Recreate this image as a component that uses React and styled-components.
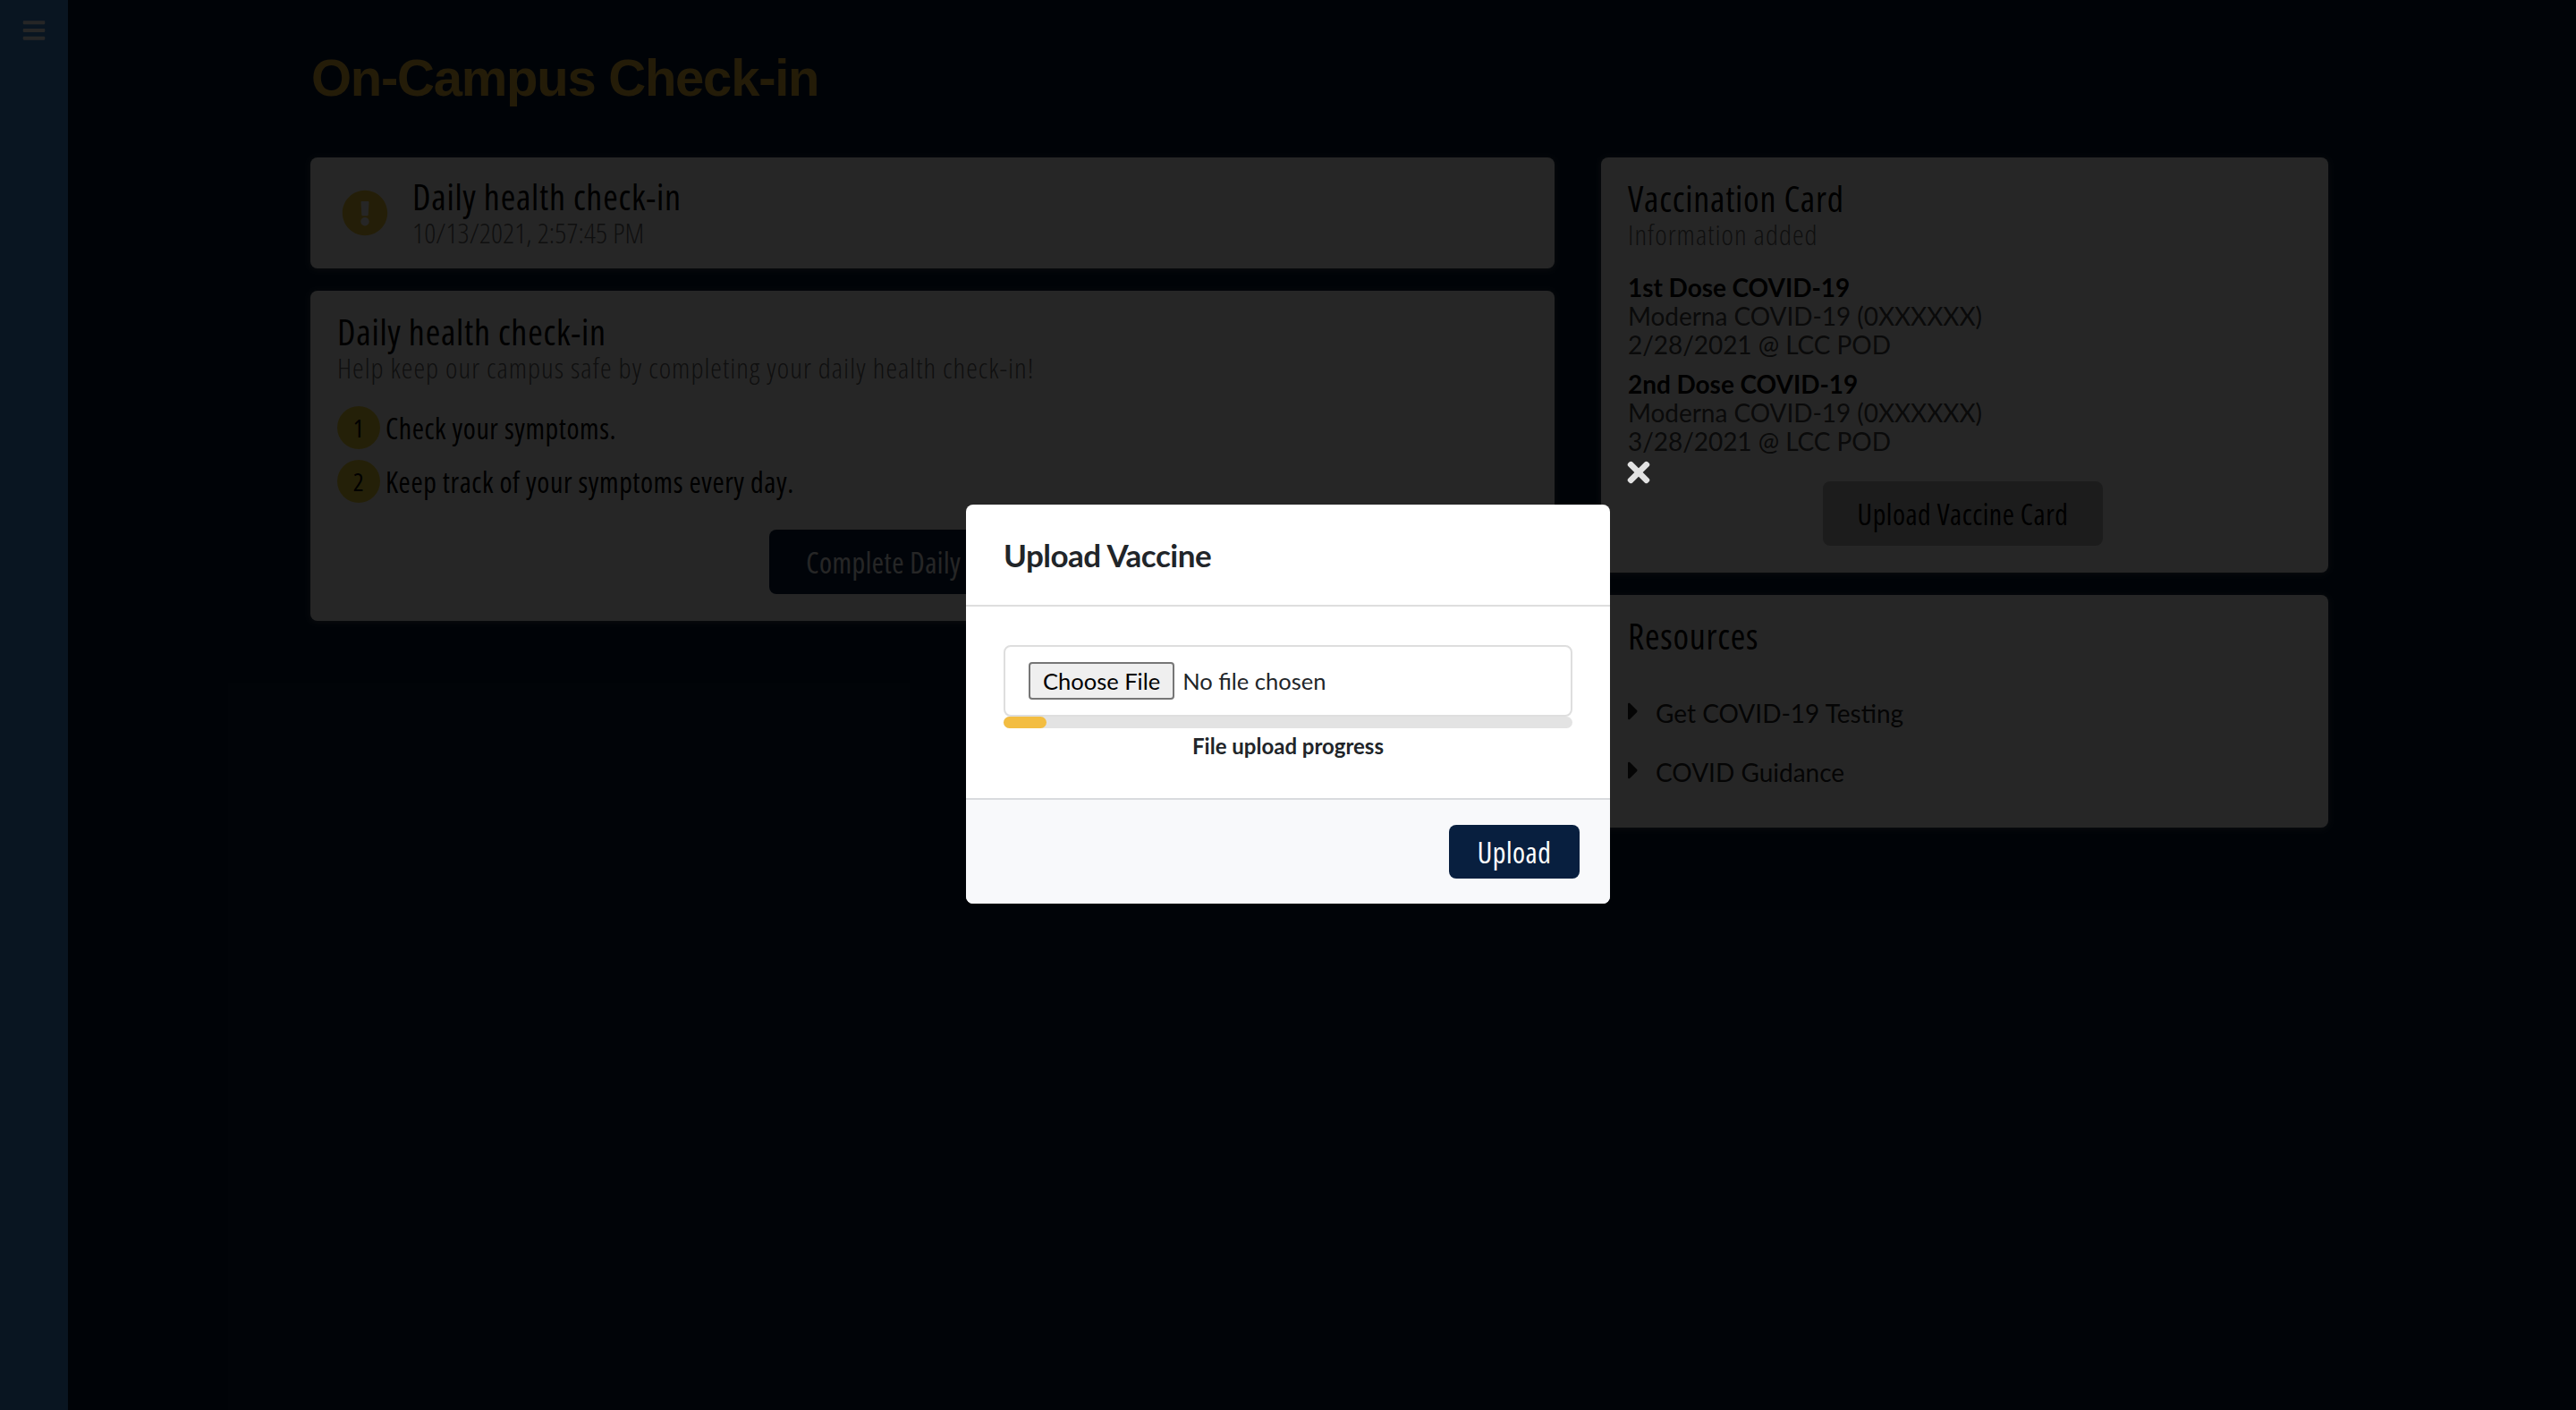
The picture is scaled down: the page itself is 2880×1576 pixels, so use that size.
import styled, { createGlobalStyle } from "styled-components";
import { FaBars, FaCaretRight, FaExclamationCircle, FaTimes } from "react-icons/fa";

const narrow = `"Open Sans", "Roboto", sans-serif`;

const GlobalStyle = createGlobalStyle`
  html, body {
    margin: 0;
    padding: 0;
    background: #ffffff;
    font-family: "Lato", sans-serif;
  }
  * {
    box-sizing: border-box;
  }
`;

const Page = styled.div`
  position: relative;
  display: flex;
  width: 2880px;
  height: 1576px;
  overflow: hidden;
  background: #061a34;
`;

const Sidebar = styled.aside`
  flex: 0 0 76px;
  padding: 20px 0 0 24px;
  background: #3d8fd9;
  color: #ffffff;
  font-size: 28px;
`;

const Main = styled.main`
  flex: 1;
  padding: 52px 0 0 271px;
`;

const PageTitle = styled.h1`
  margin: 0 0 54px 1px;
  height: 70px;
  font-family: "Liberation Sans", sans-serif;
  font-size: 58px;
  line-height: 70px;
  font-weight: 700;
  letter-spacing: -1.25px;
  color: #f2b93b;
`;

const Columns = styled.div`
  display: flex;
  gap: 52px;
  align-items: flex-start;
`;

const Column = styled.div`
  display: flex;
  flex-direction: column;
  gap: 25px;
  width: ${(p) => p.$width}px;
`;

const Card = styled.section`
  padding: 24px 30px 30px;
  background: #ffffff;
  border-radius: 8px;
  box-shadow: 0 1px 6px rgba(128, 128, 128, 0.6);
`;

const StatusCard = styled(Card)`
  display: flex;
  align-items: center;
  gap: 27px;
  height: 124px;
  padding: 0 35px;
  color: #f0c93b;
  font-size: 52px;
`;

const CardTitle = styled.h2`
  margin: 0;
  font-family: ${narrow};
  font-stretch: 75%;
  font-size: 40px;
  line-height: 44px;
  letter-spacing: 0.75px;
  font-weight: 400;
  color: #000000;
`;

const CardSub = styled.div`
  font-family: ${narrow};
  font-stretch: 75%;
  font-weight: 300;
  font-size: 32px;
  line-height: 36px;
  letter-spacing: ${(p) => p.$spacing ?? 1}px;
  color: #666666;
`;

const Steps = styled.ol`
  display: flex;
  flex-direction: column;
  gap: 12px;
  margin: 25px 0 30px;
  padding: 0;
  list-style: none;
`;

const Step = styled.li`
  display: flex;
  align-items: center;
  gap: 6px;
  font-family: ${narrow};
  font-stretch: 75%;
  font-size: 32px;
  letter-spacing: 0.55px;
  color: #000000;
`;

const StepNumber = styled.span`
  display: flex;
  align-items: center;
  justify-content: center;
  width: 48px;
  height: 48px;
  border-radius: 50%;
  background: #f2d43b;
  font-size: 28px;
`;

const Centered = styled.div`
  display: flex;
  justify-content: center;
  margin-top: ${(p) => p.$top || 0}px;
`;

const ActionButton = styled.button`
  width: ${(p) => p.$width}px;
  height: 72px;
  margin-right: 4px;
  border: 0;
  border-radius: 8px;
  background: ${(p) => p.$bg};
  color: ${(p) => p.$fg};
  font-family: ${narrow};
  font-stretch: 75%;
  font-size: 32px;
  letter-spacing: 0.5px;
  white-space: nowrap;
`;

const Dose = styled.div`
  margin-top: ${(p) => p.$top}px;
  font-size: 28px;
  line-height: 32px;
  letter-spacing: -0.05px;
  color: #444444;

  strong {
    display: block;
    color: #000000;
  }
`;

const ResourceList = styled.ul`
  display: flex;
  flex-direction: column;
  gap: 34px;
  margin: 48px 0 16px;
  padding: 0;
  list-style: none;
`;

const Resource = styled.li`
  display: flex;
  align-items: center;
  gap: 19px;
  font-size: 28px;
  line-height: 32px;
  color: #222222;

  svg {
    width: 12px;
    height: 32px;
    margin-top: -4px;
  }
`;

const Overlay = styled.div`
  position: absolute;
  inset: 0;
  display: flex;
  justify-content: center;
  padding-top: 564px;
  background: rgba(0, 0, 0, 0.85);
`;

const Modal = styled.div`
  position: relative;
  width: 720px;
  height: 446px;
  display: flex;
  flex-direction: column;
  border-radius: 8px;
  background: #ffffff;
  overflow: visible;
`;

const CloseIcon = styled.span`
  position: absolute;
  left: 734px;
  top: -54px;
  color: #e2e2e2;
  font-size: 36px;
  line-height: 1;
`;

const ModalHeader = styled.header`
  display: flex;
  align-items: center;
  height: 114px;
  padding: 0 42px;
  border-bottom: 2px solid #dedede;
`;

const ModalTitle = styled.h3`
  margin: 0;
  font-size: 35px;
  font-weight: 700;
  letter-spacing: -0.5px;
  color: #212529;
`;

const ModalBody = styled.div`
  flex: 1;
  padding: 43px 42px 0;
`;

const FileBox = styled.div`
  display: flex;
  align-items: center;
  height: 80px;
  padding: 0 26px;
  border: 2px solid #dedede;
  border-radius: 8px;
`;

const FileInput = styled.input`
  font-family: "Lato", sans-serif;
  font-size: 25.5px;
  color: #212529;

  &::file-selector-button {
    height: 42px;
    margin-right: 9px;
    padding: 0 14px;
    border: 2px solid #767676;
    border-radius: 4px;
    background: #efefef;
    font: inherit;
    color: #000000;
  }
`;

const Track = styled.div`
  height: 13px;
  border-radius: 7px;
  background: #e3e3e3;
`;

const Bar = styled.div`
  width: 48px;
  height: 100%;
  border-radius: 7px;
  background: #f3bd41;
`;

const ProgressLabel = styled.div`
  margin-top: 5px;
  text-align: center;
  font-size: 24px;
  line-height: 30px;
  font-weight: 700;
  color: #212529;
`;

const ModalFooter = styled.footer`
  display: flex;
  justify-content: flex-end;
  align-items: center;
  height: 118px;
  padding: 0 34px 0 0;
  border-top: 2px solid #d9dbde;
  border-radius: 0 0 8px 8px;
  background: #f8f9fb;
`;

const UploadButton = styled.button`
  width: 146px;
  height: 60px;
  border: 0;
  border-radius: 8px;
  background: #081f3f;
  color: #ffffff;
  font-family: ${narrow};
  font-stretch: 75%;
  font-size: 32px;
  letter-spacing: 0.5px;
`;

export default function App() {
  return (
    <Page>
      <GlobalStyle />
      <Sidebar>
        <FaBars />
      </Sidebar>
      <Main>
        <PageTitle>On-Campus Check-in</PageTitle>
        <Columns>
          <Column $width={1391}>
            <StatusCard>
              <FaExclamationCircle />
              <div>
                <CardTitle>Daily health check-in</CardTitle>
                <CardSub $spacing={0.1}>10/13/2021, 2:57:45 PM</CardSub>
              </div>
            </StatusCard>
            <Card>
              <CardTitle>Daily health check-in</CardTitle>
              <CardSub>Help keep our campus safe by completing your daily health check-in!</CardSub>
              <Steps>
                <Step>
                  <StepNumber>1</StepNumber>
                  Check your symptoms.
                </Step>
                <Step>
                  <StepNumber>2</StepNumber>
                  Keep track of your symptoms every day.
                </Step>
              </Steps>
              <Centered>
                <ActionButton $width={362} $bg="#081f3f" $fg="#ffffff">
                  Complete Daily Check-in
                </ActionButton>
              </Centered>
            </Card>
          </Column>
          <Column $width={813}>
            <Card>
              <CardTitle>Vaccination Card</CardTitle>
              <CardSub>Information added</CardSub>
              <Dose $top={25}>
                <strong>1st Dose COVID-19</strong>
                Moderna COVID-19 (0XXXXXX)
                <br />
                2/28/2021 @ LCC POD
              </Dose>
              <Dose $top={12}>
                <strong>2nd Dose COVID-19</strong>
                Moderna COVID-19 (0XXXXXX)
                <br />
                3/28/2021 @ LCC POD
              </Dose>
              <Centered $top={29}>
                <ActionButton $width={313} $bg="#bdbdbd" $fg="#000000">
                  Upload Vaccine Card
                </ActionButton>
              </Centered>
            </Card>
            <Card>
              <CardTitle>Resources</CardTitle>
              <ResourceList>
                <Resource>
                  <FaCaretRight />
                  Get COVID-19 Testing
                </Resource>
                <Resource>
                  <FaCaretRight />
                  COVID Guidance
                </Resource>
              </ResourceList>
            </Card>
          </Column>
        </Columns>
      </Main>
      <Overlay>
        <Modal>
          <CloseIcon>
            <FaTimes />
          </CloseIcon>
          <ModalHeader>
            <ModalTitle>Upload Vaccine</ModalTitle>
          </ModalHeader>
          <ModalBody>
            <FileBox>
              <FileInput type="file" />
            </FileBox>
            <Track>
              <Bar />
            </Track>
            <ProgressLabel>File upload progress</ProgressLabel>
          </ModalBody>
          <ModalFooter>
            <UploadButton>Upload</UploadButton>
          </ModalFooter>
        </Modal>
      </Overlay>
    </Page>
  );
}
